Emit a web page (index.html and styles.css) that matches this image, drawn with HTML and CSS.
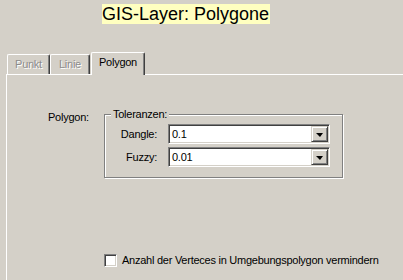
FILE: index.html
```html
<!DOCTYPE html>
<html>
<head>
<meta charset="utf-8">
<link rel="stylesheet" href="styles.css">
</head>
<body>
<div class="header"><span class="title">GIS-Layer: Polygone</span></div>
<div class="tabs">
  <div class="tab tab-punkt disabled">Punkt</div>
  <div class="tab tab-linie disabled">Linie</div>
  <div class="tab tab-polygon active">Polygon</div>
</div>
<div class="panel">
  <div class="row">
    <div class="label-main">Polygon:</div>
    <fieldset class="group">
      <legend class="legend">Toleranzen:</legend>
      <div class="field">
        <span class="flabel">Dangle:</span>
        <div class="combo"><span class="value">0.1</span><span class="btn"><span class="arrow"></span></span></div>
      </div>
      <div class="field">
        <span class="flabel">Fuzzy:</span>
        <div class="combo"><span class="value">0.01</span><span class="btn"><span class="arrow"></span></span></div>
      </div>
    </fieldset>
  </div>
  <div class="checkrow">
    <span class="checkbox"></span>
    <span class="checklabel">Anzahl der Verteces in Umgebungspolygon vermindern</span>
  </div>
</div>
</body>
</html>
```
FILE: styles.css
```css
html, body {
  margin: 0;
  padding: 0;
  width: 403px;
  height: 280px;
  overflow: hidden;
  background: #d4d0c8;
  font-family: "Liberation Sans", Arial, sans-serif;
  font-size: 11px;
  letter-spacing: -0.25px;
  color: #000;
}
.header {
  padding: 4px 0 0 102px;
  height: 20px;
}
.title {
  display: inline-block;
  height: 20px;
  line-height: 20px;
  font-size: 18px;
  letter-spacing: 0;
  padding-right: 1px;
  background: #ffffc0;
}
.tabs {
  display: flex;
  align-items: flex-end;
  margin-top: 28px;
  padding-left: 7px;
  height: 22px;
  position: relative;
  z-index: 1;
}
.tab {
  box-sizing: border-box;
  display: flex;
  justify-content: center;
  padding-top: 3px;
  line-height: 13px;
  border-top: 1px solid #fff;
  border-left: 1px solid #fff;
  border-right: 1px solid #404040;
  border-radius: 2px 2px 0 0;
  box-shadow: inset -1px 0 #808080;
  background: #d4d0c8;
}
.tab-punkt { width: 43px; height: 20px; }
.tab-linie { width: 40px; height: 20px; }
.tab-polygon { width: 54px; height: 23px; margin-left: 1px; margin-bottom: -1px; padding-top: 3px; }
.disabled {
  color: #8c8c8c;
  text-shadow: 1px 1px 0 #fff;
}
.panel {
  box-sizing: border-box;
  margin-left: 6px;
  border-top: 1px solid #fff;
  border-left: 1px solid #fff;
  height: 206px;
  padding: 33px 0 0 41px;
}
.row {
  display: flex;
  align-items: flex-start;
}
.label-main {
  width: 56px;
  margin-top: 3px;
  line-height: 13px;
}
.group {
  box-sizing: border-box;
  width: 239px;
  margin: 0;
  padding: 3px 0 10px 0;
  border: 1px solid #808080;
  box-shadow: inset 1px 1px #fff, 1px 1px #fff;
  min-width: 0;
}
.legend {
  padding: 0 2px;
  margin-left: 6px;
  line-height: 13px;
  background: #d4d0c8;
}
.field {
  display: flex;
  align-items: center;
  height: 20px;
}
.field + .field { margin-top: 3px; }
.flabel {
  width: 52px;
  text-align: right;
  margin-right: 11px;
}
.combo {
  box-sizing: border-box;
  width: 162px;
  height: 20px;
  display: flex;
  align-items: center;
  justify-content: space-between;
  border-top: 1px solid #808080;
  border-left: 1px solid #808080;
  border-bottom: 1px solid #fff;
  border-right: 1px solid #fff;
  box-shadow: inset 1px 1px #404040, inset -1px -1px #d4d0c8;
  background: #fff;
  padding: 1px 1px 1px 2px;
}
.value { line-height: 13px; padding-left: 1px; }
.btn {
  box-sizing: border-box;
  width: 17px;
  height: 16px;
  display: flex;
  align-items: center;
  justify-content: center;
  background: #d4d0c8;
  border-top: 1px solid #d4d0c8;
  border-left: 1px solid #d4d0c8;
  border-bottom: 1px solid #404040;
  border-right: 1px solid #404040;
  box-shadow: inset 1px 1px #fff, inset -1px -1px #808080;
}
.arrow {
  width: 0;
  height: 0;
  border-left: 4px solid transparent;
  border-right: 3px solid transparent;
  border-top: 4px solid #000;
  margin-top: 1px;
}
.checkrow {
  display: flex;
  align-items: center;
  margin: 76px 0 0 56px;
  height: 13px;
}
.checkbox {
  box-sizing: border-box;
  width: 13px;
  height: 13px;
  background: #fff;
  border-top: 1px solid #808080;
  border-left: 1px solid #808080;
  border-bottom: 1px solid #fff;
  border-right: 1px solid #fff;
  box-shadow: inset 1px 1px #404040, inset -1px -1px #d4d0c8;
  margin-right: 5px;
}
.checklabel { line-height: 13px; }
```
